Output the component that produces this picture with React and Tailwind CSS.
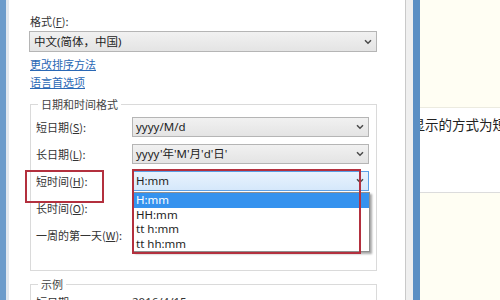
const Chevron = () => (
  <svg width="8" height="6" viewBox="0 0 8 6" className="shrink-0">
    <path d="M1 1.2 L4 4.2 L7 1.2" fill="none" stroke="#4a4a4a" strokeWidth="1.5" />
  </svg>
);

const Key = ({ k }) => <span className="underline">{k}</span>;

const Select = ({ value, active = false, className = "" }) => (
  <div
    className={`flex h-[20px] items-center justify-between border pl-[3px] pr-[4px] font-['Noto_Sans','Noto_Sans_CJK_SC',sans-serif] text-[11.5px] text-[#1e1e1e] ${
      active
        ? "border-[#5a9fe6] bg-gradient-to-b from-[#e9f3fd] to-[#d5e8fb]"
        : "border-[#b5b5b5] bg-gradient-to-b from-[#f1f1f1] to-[#e4e4e4]"
    } ${className}`}
  >
    <span className="leading-none">{value}</span>
    <Chevron />
  </div>
);

const Row = ({ label, children }) => (
  <div className="relative flex h-[20px] items-center">
    <div className="w-[96px] text-[11px] text-[#333]">{label}</div>
    {children}
  </div>
);

const times = ["H:mm", "HH:mm", "tt h:mm", "tt hh:mm"];

export default function App() {
  return (
    <div className="relative flex h-[300px] w-[500px] overflow-hidden bg-white font-['Noto_Sans_CJK_SC',sans-serif]">
      <div className="w-[6px] bg-[#6d9ccb]" />
      <div className="w-[3px] bg-[#e4e9ef]" />

      {/* dialog */}
      <div className="w-[376px] pl-[20px] pr-[8px] pt-[13px]">
        <div className="h-[16px] pl-[1px] text-[11px] leading-[16px] text-[#333]">
          格式(<Key k="F" />):
        </div>
        <Select value="中文(简体，中国)" className="mt-[2px] h-[21px] pl-[4px]" />
        <div className="mt-[3px] flex flex-col pl-[1px] text-[11px] leading-[18px] text-[#2a68b5]">
          <span className="underline">更改排序方法</span>
          <span className="underline">语言首选项</span>
        </div>

        <fieldset className="ml-[1px] mt-[6px] border border-[#dadada] pb-[25px] pl-[5px] pt-[6px]">
          <legend className="ml-[2px] px-[3px] text-[11px] leading-[14px] text-[#444]">日期和时间格式</legend>
          <div className="flex flex-col gap-[7px]">
            <Row label={<>短日期(<Key k="S" />):</>}>
              <Select value="yyyy/M/d" className="w-[237px]" />
            </Row>
            <Row label={<>长日期(<Key k="L" />):</>}>
              <Select value="yyyy'年'M'月'd'日'" className="w-[237px]" />
            </Row>
            <Row label={<>短时间(<Key k="H" />):</>}>
              <Select value="H:mm" active className="w-[237px]" />
              <div className="absolute left-[97px] top-[21px] z-10 w-[237px] border border-[#8f8f8f] bg-white font-['Noto_Sans',sans-serif] text-[11.5px] shadow-[2px_2px_2px_rgba(0,0,0,0.35)]">
                {times.map((t, i) => (
                  <div
                    key={t}
                    className={`h-[14.5px] pl-[2px] leading-[14.5px] ${i === 0 ? "bg-[#3592ee] text-white" : "text-[#1e1e1e]"}`}
                  >
                    {t}
                  </div>
                ))}
              </div>
            </Row>
            <Row label={<>长时间(<Key k="O" />):</>} />
            <Row label={<>一周的第一天(<Key k="W" />):</>} />
          </div>
        </fieldset>

        <fieldset className="ml-[1px] mt-[6px] border border-[#dadada] pl-[5px] pt-[1px]">
          <legend className="ml-[2px] px-[3px] text-[11px] leading-[14px] text-[#444]">示例</legend>
          <Row label="短日期:">
            <span className="font-['Noto_Sans',sans-serif] text-[11.5px] text-[#333]">2016/4/15</span>
          </Row>
        </fieldset>
      </div>

      <div className="w-[20px] bg-white" />
      <div className="w-[8px] border-l border-[#c9c9c9] bg-[#efefef]" />
      <div className="w-[7px] bg-[#5b8fc4]" />

      {/* page behind */}
      <div className="flex flex-1 flex-col overflow-hidden">
        <div className="h-[108px] border-b border-[#ecebe0] bg-[#fffef3]" />
        <div className="h-[85px] border-b border-[#dcdcdc] bg-white pt-[6px]">
          <div className="ml-[-8.5px] whitespace-nowrap text-[13.5px] leading-[20px] text-[#222]">显示的方式为短日期</div>
        </div>
        <div className="flex-1 bg-[#fffef3]" />
      </div>

      {/* red annotation boxes */}
      <div className="absolute left-[25px] top-[170px] h-[33px] w-[79px] border-2 border-[#b3303e]" />
      <div className="absolute left-[132px] top-[169px] z-20 h-[85px] w-[229px] border-2 border-[#b3303e]" />
    </div>
  );
}
